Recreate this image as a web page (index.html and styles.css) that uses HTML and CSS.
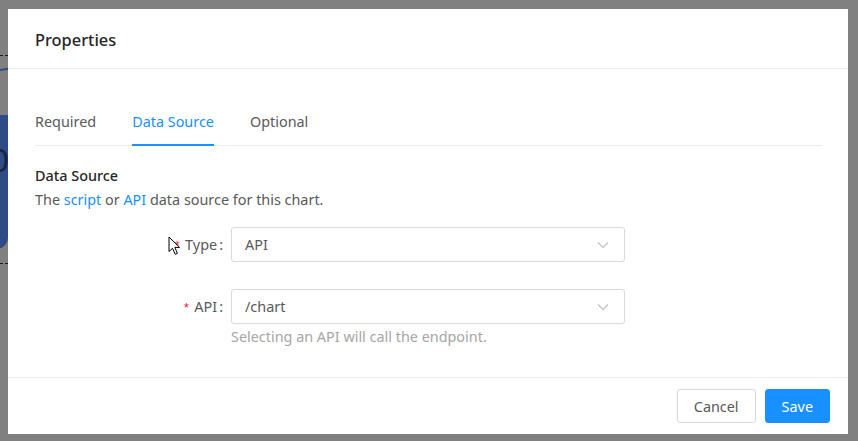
FILE: index.html
```html
<!DOCTYPE html>
<html>
<head>
<meta charset="utf-8">
<link rel="stylesheet" href="styles.css">
</head>
<body>
<div class="backdrop">
  <div class="bg-dash bg-dash-1"></div>
  <div class="bg-arc"></div>
  <div class="bg-block"><span>0</span></div>
  <div class="bg-dash bg-dash-2"></div>
</div>
<div class="stage">
  <div class="modal">
    <div class="modal-header">Properties</div>
    <div class="modal-body">
      <div class="tabs">
        <div class="tab">Required</div>
        <div class="tab active">Data Source</div>
        <div class="tab">Optional</div>
      </div>
      <div class="section">
        <div class="section-title">Data Source</div>
        <div class="section-desc">The <a class="link">script</a> or <a class="link">API</a> data source for this chart.</div>
      </div>
      <div class="form">
        <div class="row row-type">
          <div class="label"><span class="req">*</span>Type<span class="colon">:</span></div>
          <div class="control">
            <div class="select"><span>API</span>
              <svg class="chev" width="12" height="8" viewBox="0 0 12 8"><path d="M1 1.5 L6 6.5 L11 1.5" fill="none" stroke="#bfbfbf" stroke-width="1.1"/></svg>
            </div>
          </div>
          <svg class="cursor" width="14" height="20" viewBox="0 0 14 20"><path d="M1 1 L1 15.5 L4.5 12.3 L7.2 18.3 L9.4 17.3 L6.8 11.4 L11.6 11.4 Z" fill="#fff" stroke="#000" stroke-width="1" stroke-linejoin="round"/></svg>
        </div>
        <div class="row row-api">
          <div class="label"><span class="req">*</span>API<span class="colon">:</span></div>
          <div class="control">
            <div class="select"><span>/chart</span>
              <svg class="chev" width="12" height="8" viewBox="0 0 12 8"><path d="M1 1.5 L6 6.5 L11 1.5" fill="none" stroke="#bfbfbf" stroke-width="1.1"/></svg>
            </div>
            <div class="help">Selecting an API will call the endpoint.</div>
          </div>
        </div>
      </div>
    </div>
    <div class="modal-footer">
      <button class="btn">Cancel</button>
      <button class="btn primary">Save</button>
    </div>
  </div>
</div>
</body>
</html>
```
FILE: styles.css
```css
* { box-sizing: border-box; }
html, body { margin: 0; padding: 0; }
body {
  width: 858px;
  height: 441px;
  background: #808080;
  font-family: "Noto Sans", "Open Sans", sans-serif;
  font-size: 14.4px;
  color: #595959;
  overflow: hidden;
  position: relative;
}
.backdrop { position: absolute; left: 0; top: 0; width: 8px; height: 441px; overflow: hidden; }
.bg-dash { position: absolute; left: 0; width: 8px; height: 0; border-top: 1px dashed #1a1a1a; }
.bg-dash-1 { top: 55px; }
.bg-dash-2 { top: 263px; }
.bg-arc { position: absolute; left: -20px; top: 68px; width: 60px; height: 40px; border-top: 2px solid #2f4a86; border-radius: 50%; }
.bg-block { position: absolute; left: -40px; top: 115px; width: 48px; height: 134px; background: #2f4b85; border-radius: 0 0 12px 0; overflow: hidden; }
.bg-block span { position: absolute; left: 30px; top: 26px; font-size: 34px; color: #1a2440; font-family: "Liberation Sans", sans-serif; }
.stage { position: relative; padding: 9px 0 0 8px; }
.modal {
  width: 840px;
  height: 425px;
  background: #fff;
  display: flex;
  flex-direction: column;
}
.modal-header {
  height: 60px;
  padding: 2px 27px 0 27px;
  display: flex;
  align-items: center;
  font-size: 16.4px;
  font-weight: 500;
  color: #262626;
  border-bottom: 1px solid #ebebeb;
}
.modal-body { flex: 1; padding: 31px 26px 0 27px; }
.tabs {
  display: flex;
  gap: 36px;
  border-bottom: 1px solid #ebebeb;
  height: 46px;
}
.tab {
  height: 46px;
  line-height: 43px;
  color: #595959;
}
.tab.active { color: #1890ff; border-bottom: 2px solid #1890ff; }
.section { padding-top: 19px; }
.section-title { font-weight: 500; color: #262626; line-height: 22px; }
.section-desc { line-height: 24px; color: #595959; margin-top: 1px; }
.link { color: #1890ff; text-decoration: none; }
.form { margin-top: 15px; }
.row { display: flex; position: relative; }
.row-api { margin-top: 27px; }
.label {
  width: 196px;
  text-align: right;
  height: 35px;
  line-height: 35px;
  color: #595959;
  padding-right: 8px;
}
.req { color: #f5222d; margin-right: 4px; font-family: "Liberation Mono", monospace; font-size: 13px; }
.colon { margin-left: 2px; }
.control { width: 394px; }
.select {
  height: 35px;
  border: 1px solid #d9d9d9;
  border-radius: 3px;
  display: flex;
  align-items: center;
  justify-content: space-between;
  padding: 0 13px 0 13px;
  color: #595959;
}
.chev { margin-right: 2px; }
.help { color: #a6a6a6; line-height: 24px; margin-top: 1px; }
.cursor { position: absolute; left: 133px; top: 9px; }
.modal-footer {
  height: 57px;
  border-top: 1px solid #ebebeb;
  display: flex;
  justify-content: flex-end;
  align-items: flex-start;
  padding: 11px 18px 0 0;
  gap: 9px;
}
.btn {
  height: 34px;
  padding: 0 16px;
  font-family: inherit;
  font-size: 14.4px;
  border-radius: 3px;
  border: 1px solid #d9d9d9;
  background: #fff;
  color: #595959;
}
.btn.primary { background: #1890ff; border-color: #1890ff; color: #fff; }
```
